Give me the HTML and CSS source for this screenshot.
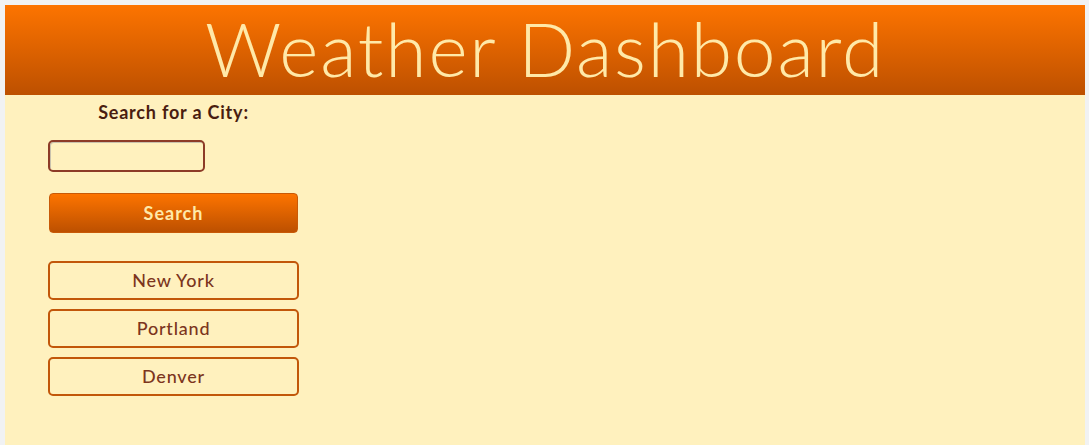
FILE: index.html
```html
<!DOCTYPE html>
<html lang="en">
<head>
<meta charset="utf-8">
<title>Weather Dashboard</title>
<link rel="stylesheet" href="styles.css">
</head>
<body>
<div class="app">
  <header class="banner">
    <h1 class="title">Weather Dashboard</h1>
  </header>
  <main class="content">
    <aside class="sidebar">
      <label class="search-label" for="city">Search for a City:</label>
      <input class="city-input" id="city" type="text">
      <button class="search-btn" type="button">Search</button>
      <div class="history">
        <button class="city-btn" type="button">New York</button>
        <button class="city-btn" type="button">Portland</button>
        <button class="city-btn" type="button">Denver</button>
      </div>
    </aside>
  </main>
</div>
</body>
</html>
```
FILE: styles.css
```css
html, body {
  height: 100%;
}
body {
  margin: 5px 4px 0 5px;
  background: #f1f2f3;
  font-family: Lato, "Open Sans", sans-serif;
  overflow: hidden;
}
.app {
  background: #fff1be;
  min-height: 100%;
}
.banner {
  height: 90px;
  background: linear-gradient(to bottom, #fd7400, #bd5000);
  display: flex;
  align-items: center;
  justify-content: center;
}
.title {
  margin: 0 0 4px;
  font-family: Lato, sans-serif;
  font-weight: 300;
  font-size: 75px;
  line-height: 86px;
  color: #ffe9a8;
  letter-spacing: 1.8px;
}
.content {
  display: flex;
  padding-left: 43px;
}
.sidebar {
  width: 251px;
  display: flex;
  flex-direction: column;
  align-items: flex-start;
}
.search-label {
  align-self: stretch;
  text-align: center;
  margin-top: 6px;
  font-weight: 700;
  font-size: 18px;
  line-height: 22px;
  letter-spacing: 0.8px;
  color: #4a1d10;
}
.city-input {
  margin-top: 17px;
  width: 157px;
  height: 32px;
  box-sizing: border-box;
  border: 2px solid #8d3b27;
  border-radius: 5px;
  background: #fff1be;
  box-shadow: inset 1px 1px 0 #c9c2ad;
  outline: none;
}
.search-btn {
  margin-top: 21px;
  margin-left: 1px;
  width: 249px;
  height: 40px;
  border: 1px solid #c85a08;
  border-radius: 4px;
  background: linear-gradient(to bottom, #fd7400, #bd5000);
  color: #ffe9a8;
  font-family: Lato, sans-serif;
  font-weight: 700;
  font-size: 18px;
  letter-spacing: 1px;
  cursor: pointer;
}
.history {
  margin-top: 28px;
  width: 251px;
  display: flex;
  flex-direction: column;
  gap: 9px;
}
.city-btn {
  height: 39px;
  box-sizing: border-box;
  border: 2px solid #c2570a;
  border-radius: 5px;
  background: transparent;
  color: #7c351d;
  font-family: Lato, sans-serif;
  font-weight: 500;
  font-size: 18px;
  letter-spacing: 0.8px;
  padding-bottom: 2px;
  cursor: pointer;
}
```
